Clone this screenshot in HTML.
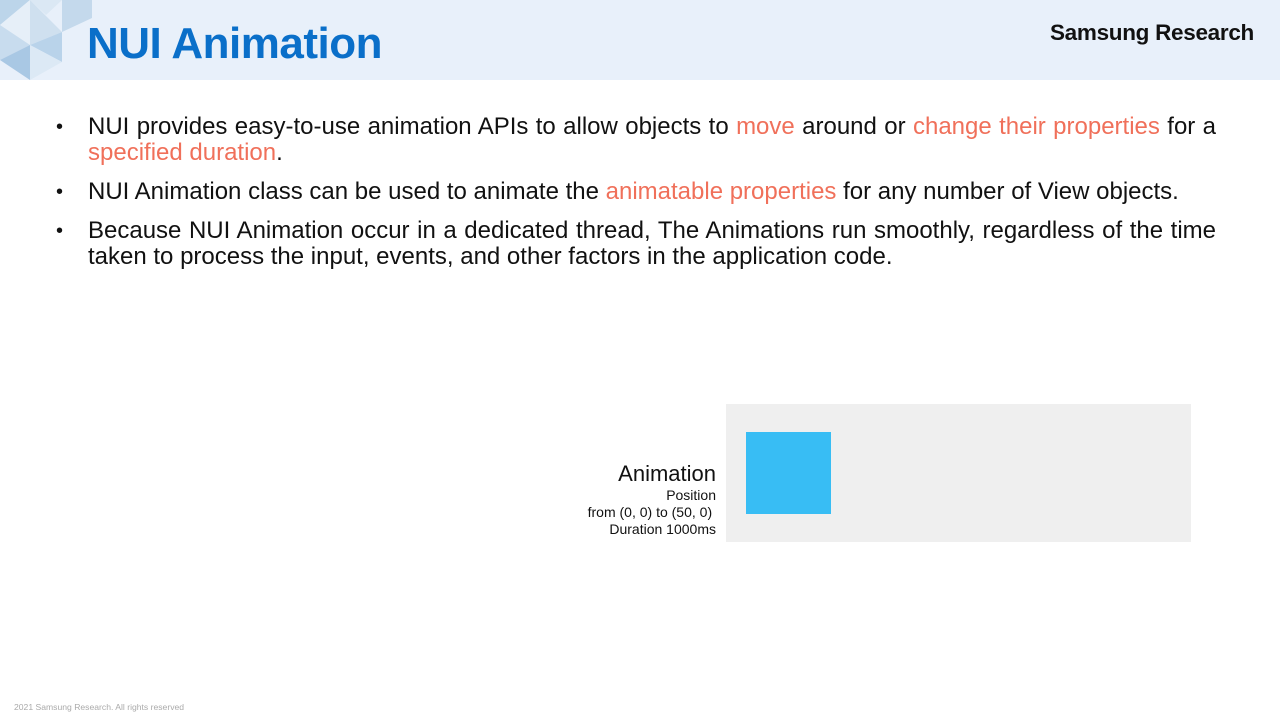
<!DOCTYPE html>
<html><head><meta charset="utf-8"><style>
body{margin:0;width:1280px;height:720px;position:relative;background:#fff;font-family:"Liberation Sans","Noto Sans CJK KR",sans-serif;overflow:hidden}
.hdr{position:absolute;left:0;top:0;width:1280px;height:80px;background:#e8f0fa}
.title{position:absolute;left:87px;top:19px;font-size:44px;font-weight:bold;color:#0a6fc9;letter-spacing:-0.5px}
.logo{position:absolute;right:26px;top:20px;font-size:22.5px;font-weight:bold;color:#111;letter-spacing:-0.3px}
ul{position:absolute;left:56px;top:114px;width:1160px;margin:0;padding:0;list-style:none;font-size:24px;color:#111}
li{position:relative;padding-left:32px;line-height:26px;margin-bottom:13px;text-align:justify}
li:before{content:"•";position:absolute;left:0;top:0;font-size:20px}
.r{color:#f0705a}
.box{position:absolute;left:726px;top:404px;width:465px;height:138px;background:#efefef}
.sq{position:absolute;left:746px;top:432px;width:85px;height:82px;background:#38bdf4}
.lab{position:absolute;right:564px;top:460px;text-align:right;color:#111;font-size:14px;line-height:17px}
.lab b{font-weight:normal;font-size:22px;display:block;line-height:27px}
.foot{position:absolute;left:14px;top:702px;font-size:8.6px;color:#aaa}
</style></head><body>
<div class="hdr"></div>
<svg style="position:absolute;left:0;top:0" width="95" height="80">
<polygon points="0,0 30,0 0,25" fill="#bcd5ea"/>
<polygon points="30,0 62,0 46,15" fill="#dbe8f4"/>
<polygon points="62,0 92,0 92,18 62,32" fill="#c4d9ec"/>
<polygon points="0,25 30,0 30,45" fill="#e6eff8"/>
<polygon points="30,0 62,32 30,45" fill="#cfe0ef"/>
<polygon points="0,25 30,45 0,60" fill="#c8dcee"/>
<polygon points="30,45 62,32 62,62" fill="#b9d3ea"/>
<polygon points="0,60 30,45 30,80" fill="#a9c8e4"/>
<polygon points="30,45 62,62 30,80" fill="#dce9f5"/>
</svg>
<div class="title">NUI Animation</div>
<div class="logo">Samsung Research</div>
<ul>
<li>NUI provides easy-to-use animation APIs to allow objects to <span class="r">move</span> around or <span class="r">change their properties</span> for a <span class="r">specified duration</span>.</li>
<li>NUI Animation class can be used to animate the <span class="r">animatable properties</span> for any number of View objects.</li>
<li>Because NUI Animation occur in a dedicated thread, The Animations run smoothly, regardless of the time taken to process the input, events, and other factors in the application code.</li>
</ul>
<div class="box"></div><div class="sq"></div>
<div class="lab"><b>Animation</b>Position<br>from (0, 0) to (50, 0)&nbsp;<br>Duration 1000ms</div>
<div class="foot">2021 Samsung Research. All rights reserved</div>
</body></html>
